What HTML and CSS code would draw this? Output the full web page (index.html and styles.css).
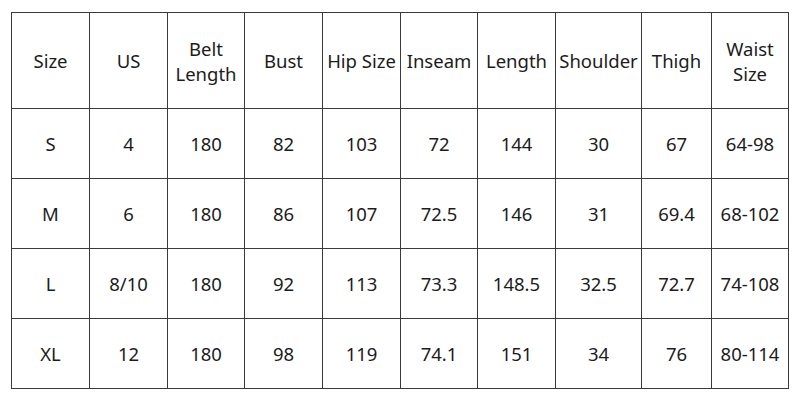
FILE: index.html
```html
<!DOCTYPE html>
<html>
<head>
<meta charset="utf-8">
<link rel="stylesheet" href="styles.css">
</head>
<body>
<table class="size-table">
  <colgroup>
    <col class="c78"><col class="c78"><col class="c77"><col class="c78"><col class="c78">
    <col class="c77"><col class="c78"><col class="c86"><col class="c70"><col class="c77">
  </colgroup>
  <thead>
    <tr>
      <th>Size</th><th>US</th><th>Belt<br>Length</th><th>Bust</th><th>Hip Size</th>
      <th>Inseam</th><th>Length</th><th>Shoulder</th><th>Thigh</th><th>Waist<br>Size</th>
    </tr>
  </thead>
  <tbody>
    <tr><td>S</td><td>4</td><td>180</td><td>82</td><td>103</td><td>72</td><td>144</td><td>30</td><td>67</td><td>64-98</td></tr>
    <tr><td>M</td><td>6</td><td>180</td><td>86</td><td>107</td><td>72.5</td><td>146</td><td>31</td><td>69.4</td><td>68-102</td></tr>
    <tr><td>L</td><td>8/10</td><td>180</td><td>92</td><td>113</td><td>73.3</td><td>148.5</td><td>32.5</td><td>72.7</td><td>74-108</td></tr>
    <tr><td>XL</td><td>12</td><td>180</td><td>98</td><td>119</td><td>74.1</td><td>151</td><td>34</td><td>76</td><td>80-114</td></tr>
  </tbody>
</table>
</body>
</html>
```
FILE: styles.css
```css
html, body {
  margin: 0;
  background: #ffffff;
}
body {
  padding: 12px 0 0 11px;
  font-family: "Noto Sans", "Open Sans", sans-serif;
  color: #1c1c1c;
}
.size-table {
  border-collapse: collapse;
  table-layout: fixed;
  width: 778px;
}
.c78 { width: 78px; }
.c77 { width: 77px; }
.c86 { width: 86px; }
.c70 { width: 70px; }
.size-table th,
.size-table td {
  border: 1px solid #3a3a3a;
  padding: 0;
  text-align: center;
  vertical-align: middle;
  font-size: 18.5px;
  font-weight: 400;
  white-space: nowrap;
}
.size-table th {
  height: 95px;
  line-height: 25px;
}
.size-table td {
  height: 69px;
  line-height: 22px;
}
```
